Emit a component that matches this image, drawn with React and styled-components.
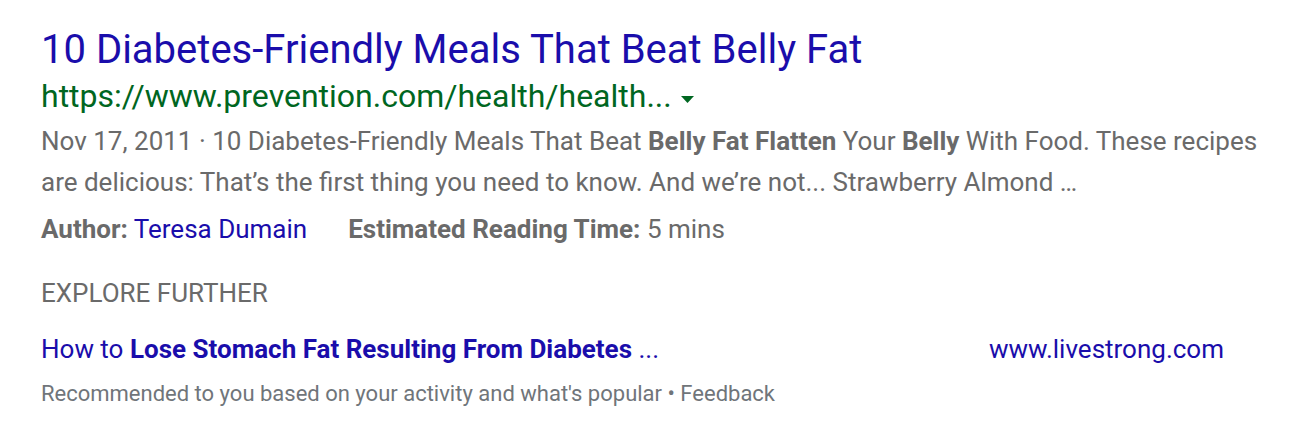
import React from "react";
import styled, { createGlobalStyle } from "styled-components";

const Global = createGlobalStyle`
  html, body { margin: 0; padding: 0; background: #fff; }
  body { font-family: Roboto, "Liberation Sans", Arial, sans-serif; }
`;

const Result = styled.div`
  padding: 26px 0 0 41px;
  width: 1230px;
`;

const Title = styled.a`
  display: block;
  font-size: 40px;
  line-height: 48px;
  color: #1a0dab;
  text-decoration: none;
  white-space: nowrap;
`;

const UrlRow = styled.div`
  display: flex;
  align-items: center;
  gap: 9px;
  height: 44px;
`;

const Url = styled.cite`
  font-style: normal;
  font-size: 32px;
  color: #006621;
  white-space: nowrap;
`;

const Caret = styled.svg`
  width: 13px;
  height: 7px;
  margin-top: 6px;
`;

const Snippet = styled.div`
  margin-top: 3px;
  font-size: 26px;
  line-height: 41px;
  color: #6a6a6a;
  b { font-weight: 700; }
`;

const Meta = styled.div`
  margin-top: 6px;
  display: flex;
  gap: 41px;
  font-size: 26px;
  line-height: 41px;
  color: #6a6a6a;
`;

const MetaItem = styled.span`
  b { font-weight: 700; }
`;

const MetaLink = styled.a`
  color: #1a0dab;
  text-decoration: none;
`;

const Heading = styled.div`
  margin-top: 28px;
  font-size: 26px;
  line-height: 30px;
  color: #6a6a6a;
  text-transform: uppercase;
`;

const ExploreRow = styled.div`
  margin-top: 26px;
  display: flex;
  justify-content: space-between;
  width: 1183px;
  font-size: 26px;
  line-height: 30px;
`;

const ExploreLink = styled.a`
  color: #1a0dab;
  text-decoration: none;
  white-space: nowrap;
  b { font-weight: 700; }
`;

const Footer = styled.div`
  margin-top: 18px;
  font-size: 22px;
  line-height: 24px;
  color: #70757a;
`;

export default function App() {
  return (
    <>
      <Global />
      <Result>
        <Title href="#">10 Diabetes-Friendly Meals That Beat Belly Fat</Title>
        <UrlRow>
          <Url>https://www.prevention.com/health/health...</Url>
          <Caret viewBox="0 0 13 7">
            <path d="M0 0h13L6.5 7z" fill="#006621" />
          </Caret>
        </UrlRow>
        <Snippet>
          Nov 17, 2011 · 10 Diabetes-Friendly Meals That Beat <b>Belly Fat Flatten</b> Your <b>Belly</b> With Food. These recipes are delicious: That’s the first thing you need to know. And we’re not... Strawberry Almond …
        </Snippet>
        <Meta>
          <MetaItem>
            <b>Author:</b> <MetaLink href="#">Teresa Dumain</MetaLink>
          </MetaItem>
          <MetaItem>
            <b>Estimated Reading Time:</b> 5 mins
          </MetaItem>
        </Meta>
        <Heading>Explore further</Heading>
        <ExploreRow>
          <ExploreLink href="#">
            How to <b>Lose Stomach Fat Resulting From Diabetes</b> ...
          </ExploreLink>
          <ExploreLink href="#">www.livestrong.com</ExploreLink>
        </ExploreRow>
        <Footer>Recommended to you based on your activity and what's popular • Feedback</Footer>
      </Result>
    </>
  );
}
